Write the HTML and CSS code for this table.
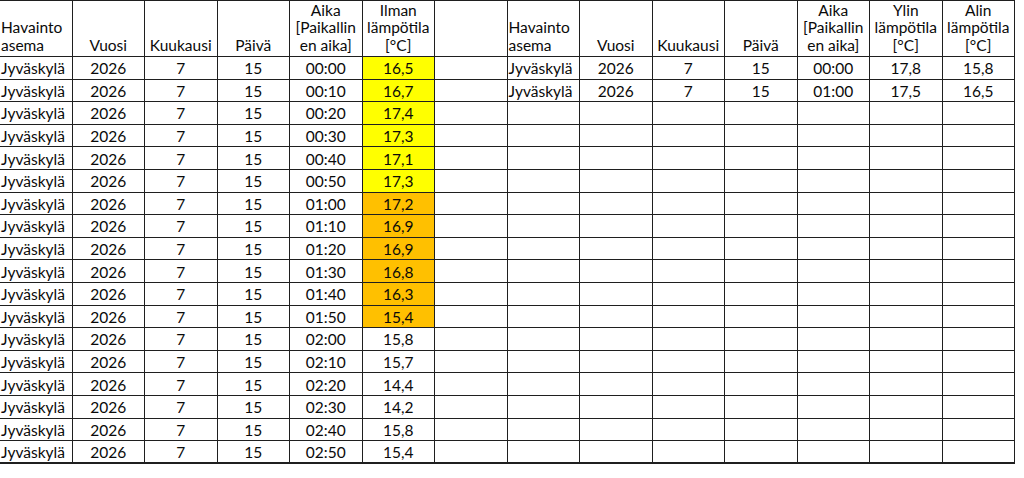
FILE: index.html
```html
<!DOCTYPE html>
<html lang="fi">
<head>
<meta charset="utf-8">
<title>Lämpötilat</title>
<link rel="stylesheet" href="styles.css">
</head>
<body>
<table class="sheet">
<thead>
<tr class="head">
<th class="l">Havainto<br>asema</th><th>Vuosi</th><th>Kuukausi</th><th>Päivä</th><th>Aika<br>[Paikallin<br>en aika]</th><th>Ilman<br>lämpötila<br>[°C]</th><th></th>
<th class="l">Havainto<br>asema</th><th>Vuosi</th><th>Kuukausi</th><th>Päivä</th><th>Aika<br>[Paikallin<br>en aika]</th><th>Ylin<br>lämpötila<br>[°C]</th><th>Alin<br>lämpötila<br>[°C]</th>
</tr>
</thead>
<tbody>
<tr><td class="l">Jyväskylä</td><td>2026</td><td>7</td><td>15</td><td>00:00</td><td class="y">16,5</td><td></td><td class="l">Jyväskylä</td><td>2026</td><td>7</td><td>15</td><td>00:00</td><td>17,8</td><td>15,8</td></tr>
<tr><td class="l">Jyväskylä</td><td>2026</td><td>7</td><td>15</td><td>00:10</td><td class="y">16,7</td><td></td><td class="l">Jyväskylä</td><td>2026</td><td>7</td><td>15</td><td>01:00</td><td>17,5</td><td>16,5</td></tr>
<tr><td class="l">Jyväskylä</td><td>2026</td><td>7</td><td>15</td><td>00:20</td><td class="y">17,4</td><td></td><td></td><td></td><td></td><td></td><td></td><td></td><td></td></tr>
<tr><td class="l">Jyväskylä</td><td>2026</td><td>7</td><td>15</td><td>00:30</td><td class="y">17,3</td><td></td><td></td><td></td><td></td><td></td><td></td><td></td><td></td></tr>
<tr><td class="l">Jyväskylä</td><td>2026</td><td>7</td><td>15</td><td>00:40</td><td class="y">17,1</td><td></td><td></td><td></td><td></td><td></td><td></td><td></td><td></td></tr>
<tr><td class="l">Jyväskylä</td><td>2026</td><td>7</td><td>15</td><td>00:50</td><td class="y">17,3</td><td></td><td></td><td></td><td></td><td></td><td></td><td></td><td></td></tr>
<tr><td class="l">Jyväskylä</td><td>2026</td><td>7</td><td>15</td><td>01:00</td><td class="o">17,2</td><td></td><td></td><td></td><td></td><td></td><td></td><td></td><td></td></tr>
<tr><td class="l">Jyväskylä</td><td>2026</td><td>7</td><td>15</td><td>01:10</td><td class="o">16,9</td><td></td><td></td><td></td><td></td><td></td><td></td><td></td><td></td></tr>
<tr><td class="l">Jyväskylä</td><td>2026</td><td>7</td><td>15</td><td>01:20</td><td class="o">16,9</td><td></td><td></td><td></td><td></td><td></td><td></td><td></td><td></td></tr>
<tr><td class="l">Jyväskylä</td><td>2026</td><td>7</td><td>15</td><td>01:30</td><td class="o">16,8</td><td></td><td></td><td></td><td></td><td></td><td></td><td></td><td></td></tr>
<tr><td class="l">Jyväskylä</td><td>2026</td><td>7</td><td>15</td><td>01:40</td><td class="o">16,3</td><td></td><td></td><td></td><td></td><td></td><td></td><td></td><td></td></tr>
<tr><td class="l">Jyväskylä</td><td>2026</td><td>7</td><td>15</td><td>01:50</td><td class="o">15,4</td><td></td><td></td><td></td><td></td><td></td><td></td><td></td><td></td></tr>
<tr><td class="l">Jyväskylä</td><td>2026</td><td>7</td><td>15</td><td>02:00</td><td>15,8</td><td></td><td></td><td></td><td></td><td></td><td></td><td></td><td></td></tr>
<tr><td class="l">Jyväskylä</td><td>2026</td><td>7</td><td>15</td><td>02:10</td><td>15,7</td><td></td><td></td><td></td><td></td><td></td><td></td><td></td><td></td></tr>
<tr><td class="l">Jyväskylä</td><td>2026</td><td>7</td><td>15</td><td>02:20</td><td>14,4</td><td></td><td></td><td></td><td></td><td></td><td></td><td></td><td></td></tr>
<tr><td class="l">Jyväskylä</td><td>2026</td><td>7</td><td>15</td><td>02:30</td><td>14,2</td><td></td><td></td><td></td><td></td><td></td><td></td><td></td><td></td></tr>
<tr><td class="l">Jyväskylä</td><td>2026</td><td>7</td><td>15</td><td>02:40</td><td>15,8</td><td></td><td></td><td></td><td></td><td></td><td></td><td></td><td></td></tr>
<tr class="last"><td class="l">Jyväskylä</td><td>2026</td><td>7</td><td>15</td><td>02:50</td><td>15,4</td><td></td><td></td><td></td><td></td><td></td><td></td><td></td><td></td></tr>
</tbody>
</table>
</body>
</html>
```

FILE: styles.css
```css
html, body {
  margin: 0;
  padding: 0;
  background: #ffffff;
}

.sheet {
  border-collapse: separate;
  border-spacing: 0;
  table-layout: fixed;
  width: 1015px;
  font-family: Lato, "Open Sans", sans-serif;
  font-size: 15.5px;
  color: #0a0a0a;
}

.sheet th,
.sheet td {
  border-right: 1px solid #1f1f1f;
  border-bottom: 1px solid #1f1f1f;
  padding: 0 1px;
  text-align: center;
  white-space: nowrap;
  overflow: hidden;
}

.sheet th {
  border-top: 1px solid #1f1f1f;
  font-weight: 400;
  vertical-align: bottom;
  line-height: 17.5px;
  padding-bottom: 2px;
}

.head {
  height: 57px;
}

.sheet tbody tr {
  height: 22.6px;
}

.sheet td {
  line-height: 20px;
  vertical-align: middle;
  padding-top: 1px;
}

.sheet .l {
  text-align: left;
}

.sheet .y {
  background: #ffff00;
}

.sheet .o {
  background: #ffc000;
}

.sheet .last td {
  border-bottom: 2px solid #1f1f1f;
}
```
